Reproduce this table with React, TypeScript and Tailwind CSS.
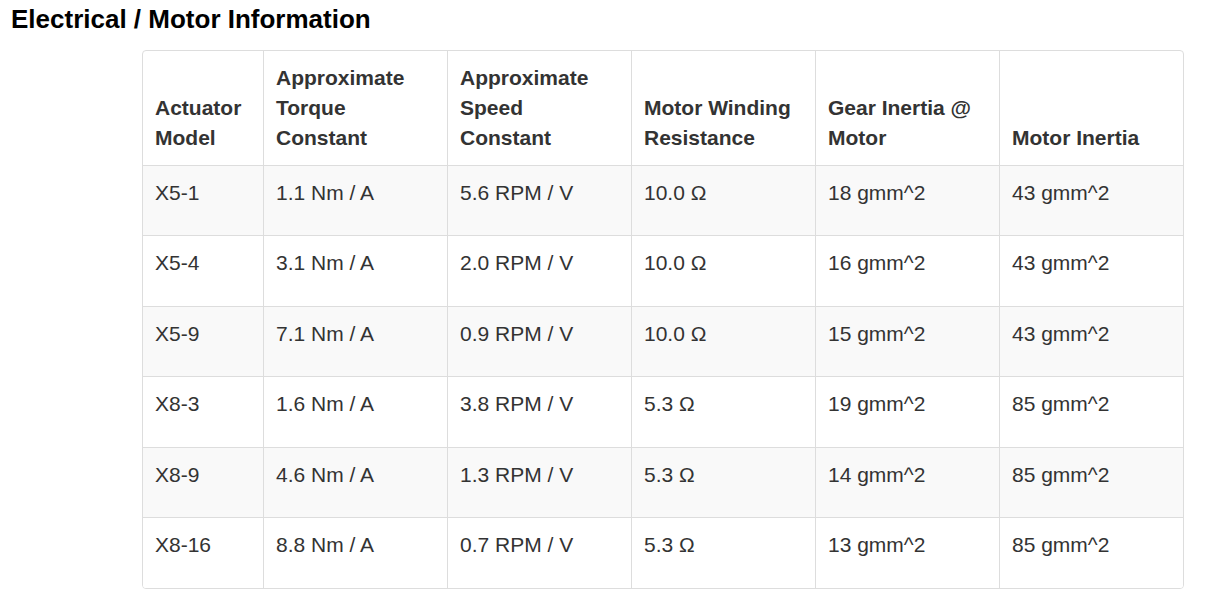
const HEADERS = [
  "Actuator Model",
  "Approximate Torque Constant",
  "Approximate Speed Constant",
  "Motor Winding Resistance",
  "Gear Inertia @ Motor",
  "Motor Inertia",
];

const ROWS = [
  ["X5-1", "1.1 Nm / A", "5.6 RPM / V", "10.0 Ω", "18 gmm^2", "43 gmm^2"],
  ["X5-4", "3.1 Nm / A", "2.0 RPM / V", "10.0 Ω", "16 gmm^2", "43 gmm^2"],
  ["X5-9", "7.1 Nm / A", "0.9 RPM / V", "10.0 Ω", "15 gmm^2", "43 gmm^2"],
  ["X8-3", "1.6 Nm / A", "3.8 RPM / V", "5.3 Ω", "19 gmm^2", "85 gmm^2"],
  ["X8-9", "4.6 Nm / A", "1.3 RPM / V", "5.3 Ω", "14 gmm^2", "85 gmm^2"],
  ["X8-16", "8.8 Nm / A", "0.7 RPM / V", "5.3 Ω", "13 gmm^2", "85 gmm^2"],
];

export default function App() {
  return (
    <div className="min-h-screen bg-white font-['Liberation_Sans',Arial,sans-serif] text-[#333]">
      <h2 className="pl-[11px] pt-[5px] text-[26px] font-bold leading-[1.1] text-black">
        Electrical / Motor Information
      </h2>

      {/* Spec table */}
      <div className="ml-[142px] mt-[16px] w-[1042px] overflow-hidden rounded-[4px] border border-[#ddd]">
        <table className="w-[1040px] table-fixed border-separate border-spacing-0 text-[21px] leading-[30px]">
          <thead>
            <tr>
              {HEADERS.map((h, i) => (
                <th
                  key={h}
                  className={
                    i === 0
                      ? "w-[120px] p-3 text-left align-bottom font-bold"
                      : "w-[184px] border-l border-[#ddd] p-3 text-left align-bottom font-bold"
                  }
                >
                  {h}
                </th>
              ))}
            </tr>
          </thead>
          <tbody>
            {ROWS.map((row, r) => (
              <tr key={row[0]} className={r % 2 === 0 ? "bg-[#f9f9f9]" : "bg-white"}>
                {row.map((cell, i) => (
                  <td
                    key={i}
                    className={
                      i === 0
                        ? "border-t border-[#ddd] px-3 pt-3 pb-[27.5px] align-top"
                        : "border-t border-l border-[#ddd] px-3 pt-3 pb-[27.5px] align-top"
                    }
                  >
                    {cell}
                  </td>
                ))}
              </tr>
            ))}
          </tbody>
        </table>
      </div>
    </div>
  );
}
